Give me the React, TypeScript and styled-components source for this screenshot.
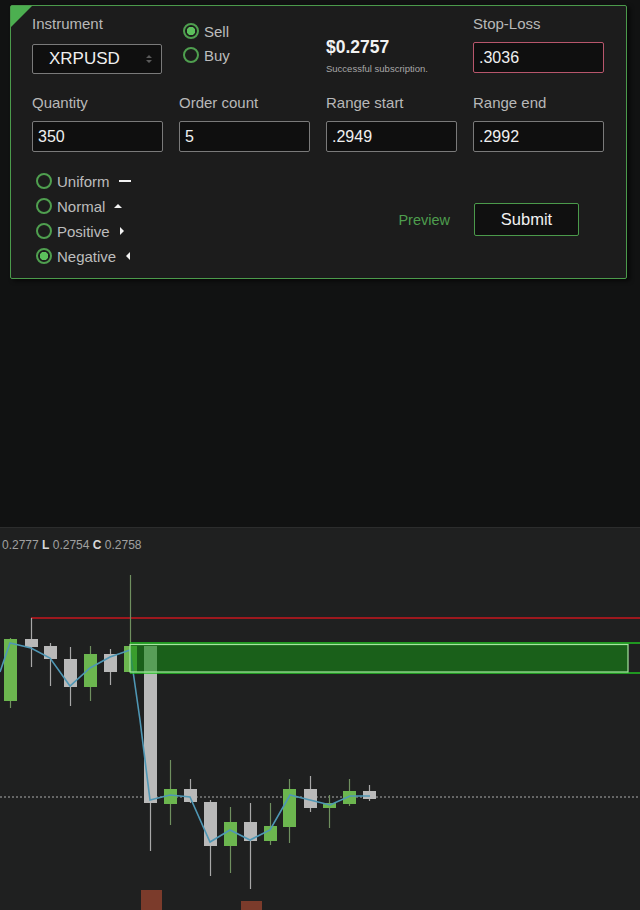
import React, { useState } from "react";
import styled, { createGlobalStyle } from "styled-components";

type Candle = {
  x: number;
  top: number;
  bottom: number;
  high: number;
  low: number;
  up: boolean;
};

// page coordinates, the chart starts at y = 528
const CHART_TOP = 528;

const CANDLES: Candle[] = [
  { x: 4, top: 639, bottom: 701, high: 638, low: 708, up: true },
  { x: 25, top: 639, bottom: 647, high: 618, low: 667, up: false },
  { x: 44, top: 646, bottom: 659, high: 643, low: 686, up: false },
  { x: 64, top: 659, bottom: 687, high: 647, low: 706, up: false },
  { x: 84, top: 654, bottom: 687, high: 646, low: 701, up: true },
  { x: 104, top: 654, bottom: 672, high: 649, low: 685, up: false },
  { x: 124, top: 646, bottom: 672, high: 575, low: 672, up: true },
  { x: 144, top: 646, bottom: 803, high: 646, low: 851, up: false },
  { x: 164, top: 789, bottom: 804, high: 760, low: 825, up: true },
  { x: 184, top: 789, bottom: 802, high: 779, low: 803, up: false },
  { x: 204, top: 802, bottom: 846, high: 800, low: 876, up: false },
  { x: 224, top: 822, bottom: 846, high: 807, low: 873, up: true },
  { x: 244, top: 822, bottom: 841, high: 803, low: 889, up: false },
  { x: 264, top: 826, bottom: 841, high: 803, low: 845, up: true },
  { x: 283, top: 789, bottom: 827, high: 779, low: 843, up: true },
  { x: 304, top: 789, bottom: 808, high: 776, low: 812, up: false },
  { x: 323, top: 803, bottom: 808, high: 795, low: 828, up: true },
  { x: 343, top: 791, bottom: 804, high: 779, low: 806, up: true },
  { x: 363, top: 791, bottom: 799, high: 785, low: 801, up: false },
];

const CLOSE_LINE: [number, number][] = [
  [0, 672], [10, 643], [31, 648], [50, 658], [70, 686], [90, 668], [110, 657],
  [130, 650], [140, 720], [150, 800], [170, 795], [190, 797], [210, 842],
  [230, 830], [250, 840], [270, 830], [290, 795], [310, 800], [330, 805],
  [350, 796], [370, 796],
];

const DISTRIBUTIONS = ["Uniform", "Normal", "Positive", "Negative"];

const GlobalStyle = createGlobalStyle`
  body {
    margin: 0;
    background: #111212;
    font-family: "Liberation Sans", Arial, sans-serif;
  }
`;

const ShapeIcon = ({ kind }: { kind: string }) => {
  if (kind === "Uniform")
    return (
      <svg width="14" height="8" viewBox="0 0 14 8">
        <rect x="1" y="3" width="12" height="2" fill="#f2f2f2" />
      </svg>
    );
  if (kind === "Normal")
    return (
      <svg width="10" height="8" viewBox="0 0 10 8">
        <path d="M1 6 L5 2 L9 6 Z" fill="#f2f2f2" />
      </svg>
    );
  if (kind === "Positive")
    return (
      <svg width="8" height="10" viewBox="0 0 8 10">
        <path d="M2 1 L6 5 L2 9 Z" fill="#f2f2f2" />
      </svg>
    );
  return (
    <svg width="8" height="10" viewBox="0 0 8 10">
      <path d="M6 1 L2 5 L6 9 Z" fill="#f2f2f2" />
    </svg>
  );
};

const Chart = () => {
  const y = (v: number) => v - CHART_TOP;
  return (
    <ChartBox>
      <svg width="640" height="382" viewBox="0 0 640 382">
        <line x1="31" y1={y(618)} x2="640" y2={y(618)} stroke="#c8161e" strokeWidth="1.5" />
        <line x1="0" y1={y(797)} x2="640" y2={y(797)} stroke="#cfcfcf" strokeWidth="1" strokeDasharray="2 2" opacity="0.8" />
        {CANDLES.map((c, i) => {
          const fill = c.up ? "#6cb64f" : "#b9b9b9";
          const wick = c.up ? "#6f8f5f" : "#a8a8a8";
          return (
            <g key={i}>
              <line x1={c.x + 6.5} y1={y(c.high)} x2={c.x + 6.5} y2={y(c.low)} stroke={wick} strokeWidth="1.2" />
              <rect x={c.x} y={y(c.top)} width="13" height={c.bottom - c.top} fill={fill} />
            </g>
          );
        })}
        <polyline
          points={CLOSE_LINE.map(([px, py]) => `${px},${y(py)}`).join(" ")}
          fill="none"
          stroke="#4f97b5"
          strokeWidth="1.6"
        />
        <line x1="130" y1={y(643)} x2="640" y2={y(643)} stroke="#22c022" strokeWidth="1.5" />
        <line x1="130" y1={y(673)} x2="640" y2={y(673)} stroke="#22c022" strokeWidth="1.5" />
        <rect x="130" y={y(644.5)} width="498" height="27.5" fill="rgba(24,140,24,0.6)" stroke="#a6e6a0" strokeWidth="1.2" />
        <rect x="141" y={y(890)} width="21" height="20" fill="#7b3b2b" />
        <rect x="241" y={y(901)} width="21" height="9" fill="#7b3b2b" />
      </svg>
      <Legend>
        0.2777 <b>L</b> 0.2754 <b>C</b> 0.2758
      </Legend>
    </ChartBox>
  );
};

const App = () => {
  const [side, setSide] = useState("Sell");
  const [dist, setDist] = useState("Negative");
  return (
    <>
      <GlobalStyle />
      <Page>
        <Panel>
          <Corner />
          <Grid>
            <Field>
              <Label>Instrument</Label>
              <Select>
                XRPUSD
                <Arrows>
                  <svg width="8" height="12" viewBox="0 0 8 12">
                    <path d="M1 5 L4 2 L7 5 Z M1 7 L4 10 L7 7 Z" fill="#5a5a5a" />
                  </svg>
                </Arrows>
              </Select>
            </Field>
            <SideGroup>
              {["Sell", "Buy"].map((s) => (
                <RadioRow key={s} onClick={() => setSide(s)}>
                  <Radio $checked={side === s} />
                  {s}
                </RadioRow>
              ))}
            </SideGroup>
            <PriceBlock>
              <Price>$0.2757</Price>
              <Status>Successful subscription.</Status>
            </PriceBlock>
            <Field>
              <Label>Stop-Loss</Label>
              <Input $danger defaultValue=".3036" />
            </Field>

            <Field>
              <Label>Quantity</Label>
              <Input defaultValue="350" />
            </Field>
            <Field>
              <Label>Order count</Label>
              <Input defaultValue="5" />
            </Field>
            <Field>
              <Label>Range start</Label>
              <Input defaultValue=".2949" />
            </Field>
            <Field>
              <Label>Range end</Label>
              <Input defaultValue=".2992" />
            </Field>
          </Grid>
          <Footer>
            <DistGroup>
              {DISTRIBUTIONS.map((d) => (
                <RadioRow key={d} onClick={() => setDist(d)}>
                  <Radio $checked={dist === d} />
                  {d}
                  <ShapeIcon kind={d} />
                </RadioRow>
              ))}
            </DistGroup>
            <Actions>
              <PreviewButton>Preview</PreviewButton>
              <SubmitButton>Submit</SubmitButton>
            </Actions>
          </Footer>
        </Panel>
        <Chart />
      </Page>
    </>
  );
};

const Page = styled.div`
  width: 640px;
  height: 910px;
  padding-top: 5px;
  box-sizing: border-box;
  display: flex;
  flex-direction: column;
  overflow: hidden;
`;

const Panel = styled.div`
  position: relative;
  margin-left: 10px;
  width: 617px;
  height: 274px;
  box-sizing: border-box;
  background: #1c1c1c;
  border: 1px solid #4b9a4b;
  border-radius: 2px;
  box-shadow: 3px 2px 4px rgba(0, 0, 0, 0.6);
  padding: 9px 0 0 21px;
`;

const Corner = styled.div`
  position: absolute;
  left: 0;
  top: 0;
  width: 0;
  height: 0;
  border-top: 21px solid #4caf50;
  border-right: 21px solid transparent;
`;

const Grid = styled.div`
  display: grid;
  grid-template-columns: repeat(4, 131px);
  column-gap: 16px;
  row-gap: 19px;
`;

const Field = styled.div`
  display: flex;
  flex-direction: column;
  gap: 9px;
`;

const Label = styled.div`
  font-size: 15px;
  line-height: 18px;
  color: #b8b8b8;
`;

const Input = styled.input<{ $danger?: boolean }>`
  width: 131px;
  height: 31px;
  box-sizing: border-box;
  background: #0f0f0f;
  border: 1px solid ${(p) => (p.$danger ? "#b8566c" : "#7a7a7a")};
  border-radius: 2px;
  color: #f0f0f0;
  font-family: "Liberation Sans", Arial, sans-serif;
  font-size: 16px;
  padding: 0 5px;
  outline: none;
`;

const Select = styled.div`
  width: 130px;
  height: 30px;
  margin-top: 2px;
  box-sizing: border-box;
  background: #0f0f0f;
  border: 1px solid #7a7a7a;
  border-radius: 2px;
  color: #f0f0f0;
  font-size: 17px;
  display: flex;
  align-items: center;
  padding-left: 16px;
`;

const Arrows = styled.span`
  margin-left: auto;
  margin-right: 8px;
  display: flex;
`;

const SideGroup = styled.div`
  display: flex;
  flex-direction: column;
  gap: 6px;
  padding: 7px 0 0 4px;
`;

const RadioRow = styled.label`
  display: flex;
  align-items: center;
  gap: 5px;
  height: 18px;
  font-size: 15px;
  color: #bdbdbd;
  cursor: pointer;
  svg {
    margin-left: 3px;
  }
`;

const Radio = styled.span<{ $checked: boolean }>`
  width: 16px;
  height: 16px;
  box-sizing: border-box;
  border-radius: 50%;
  border: 2px solid #4f9f4f;
  background: ${(p) =>
    p.$checked ? "radial-gradient(circle, #5cc05c 0 4px, #1c1c1c 4.5px)" : "#1c1c1c"};
`;

const PriceBlock = styled.div`
  display: flex;
  flex-direction: column;
  padding-top: 22px;
  gap: 6px;
`;

const Price = styled.div`
  font-size: 17.5px;
  font-weight: bold;
  color: #f2f2f2;
  line-height: 20px;
`;

const Status = styled.div`
  font-size: 9.5px;
  color: #a8a8a8;
  line-height: 12px;
`;

const Footer = styled.div`
  display: flex;
  align-items: flex-start;
  margin-top: 20px;
`;

const DistGroup = styled.div`
  display: flex;
  flex-direction: column;
  gap: 7px;
  padding-left: 4px;
`;

const Actions = styled.div`
  display: flex;
  align-items: center;
  margin-left: auto;
  margin-right: 47px;
  margin-top: 31px;
  gap: 24px;
`;

const PreviewButton = styled.button`
  background: transparent;
  border: none;
  padding: 0;
  color: #4e9e4e;
  font-family: "Liberation Sans", Arial, sans-serif;
  font-size: 14.5px;
  cursor: pointer;
`;

const SubmitButton = styled.button`
  width: 105px;
  height: 33px;
  background: #101010;
  border: 1px solid #4b9a4b;
  border-radius: 2px;
  color: #f2f2f2;
  font-family: "Liberation Sans", Arial, sans-serif;
  font-size: 16.5px;
  cursor: pointer;
`;

const ChartBox = styled.div`
  position: relative;
  margin-top: 248px;
  height: 382px;
  background: #1f2020;
  border-top: 1px solid #2c2d2d;
  svg {
    display: block;
  }
`;

const Legend = styled.div`
  position: absolute;
  left: 2px;
  top: 10px;
  font-size: 12px;
  color: #a0a0a0;
  b {
    color: #d8d8d8;
  }
`;

export default App;
